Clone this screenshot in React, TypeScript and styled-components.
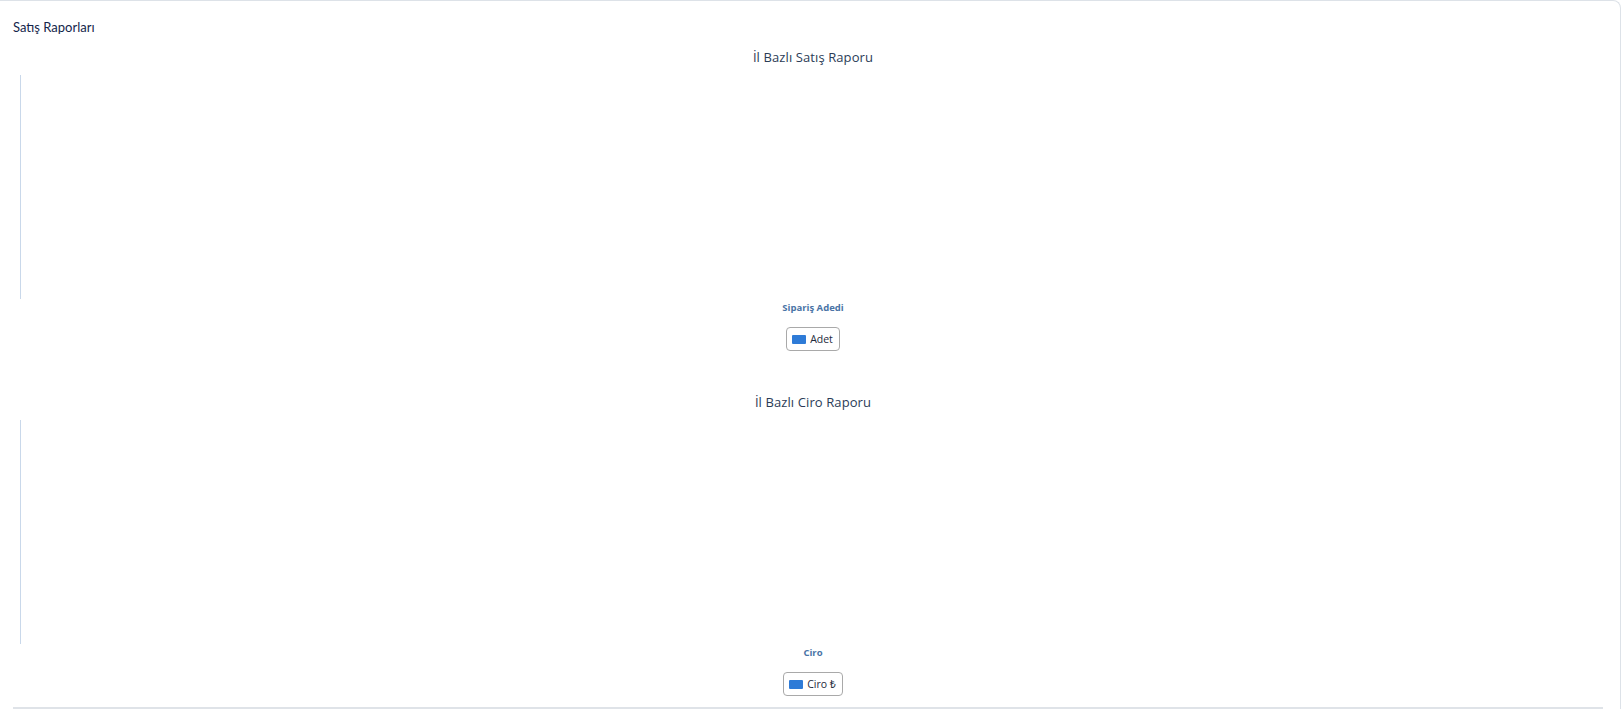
import React from "react";
import styled, { createGlobalStyle } from "styled-components";

interface ChartProps {
  title: string;
  axisLabel: string;
  legend: string;
}

const GlobalStyle = createGlobalStyle`
  html, body {
    margin: 0;
    padding: 0;
    background: #ffffff;
  }
  body {
    font-family: "Open Sans", "Noto Sans", sans-serif;
  }
`;

function ReportChart(props: ChartProps): React.ReactElement {
  const { title, axisLabel, legend } = props;

  return (
    <ChartBlock>
      <ChartTitle>{title}</ChartTitle>
      <PlotArea />
      <AxisLabel>{axisLabel}</AxisLabel>
      <LegendRow>
        <LegendButton>
          <LegendSwatch />
          {legend}
        </LegendButton>
      </LegendRow>
    </ChartBlock>
  );
}

export default function App(): React.ReactElement {
  return (
    <>
      <GlobalStyle />
      <Card>
        <CardHeader>Satış Raporları</CardHeader>
        <ReportChart
          title="İl Bazlı Satış Raporu"
          axisLabel="Sipariş Adedi"
          legend="Adet"
        />
        <ReportChart title="İl Bazlı Ciro Raporu" axisLabel="Ciro" legend="Ciro ₺" />
        <BottomRule />
      </Card>
    </>
  );
}

const Card = styled.div`
  box-sizing: border-box;
  width: 1621px;
  padding: 0 7px 0 13px;
  border-top: 1px solid #dde2e8;
  border-right: 1px solid #dde2e8;
  border-top-right-radius: 8px;
  background: #ffffff;
`;

const CardHeader = styled.div`
  padding-top: 17px;
  margin-bottom: 11px;
  height: 18px;
  line-height: 18px;
  font-family: "Lato", "Noto Sans", sans-serif;
  font-size: 13px;
  color: #14254a;
`;

const ChartBlock = styled.div`
  display: flex;
  flex-direction: column;
  align-items: center;

  & + & {
    margin-top: 41px;
  }
`;

const ChartTitle = styled.div`
  height: 20px;
  line-height: 20px;
  font-size: 13px;
  color: #2b3c57;
  letter-spacing: 0.1px;
`;

const PlotArea = styled.div`
  align-self: stretch;
  height: 224px;
  margin: 8px 0 0 7px;
  border-left: 1px solid #c9d8ea;
`;

const AxisLabel = styled.div`
  margin-top: 2px;
  height: 14px;
  line-height: 14px;
  font-size: 9.5px;
  font-weight: 700;
  color: #4a74a6;
`;

const LegendRow = styled.div`
  margin-top: 12px;
  display: flex;
  justify-content: center;
`;

const LegendButton = styled.div`
  box-sizing: border-box;
  display: flex;
  align-items: center;
  gap: 4px;
  height: 24px;
  padding: 0 6px 0 5px;
  border: 1px solid #a9a9a9;
  border-radius: 4px;
  font-size: 10.5px;
  color: #1e2a3c;
`;

const LegendSwatch = styled.span`
  display: inline-block;
  width: 14px;
  height: 9px;
  border-radius: 1px;
  background: #2e7bd7;
`;

const BottomRule = styled.div`
  width: 1590px;
  height: 2px;
  margin-top: 11px;
  background: #dfe3e8;
`;
